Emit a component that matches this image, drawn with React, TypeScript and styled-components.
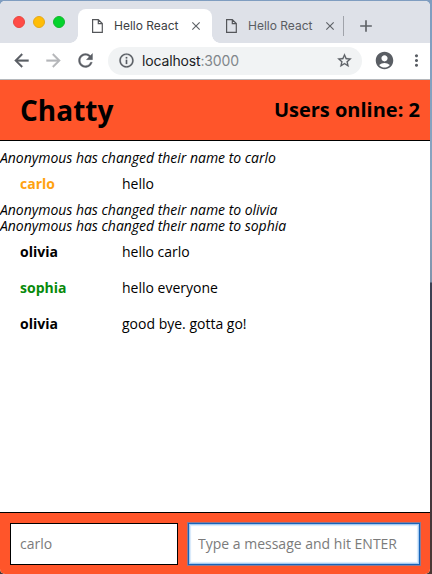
import React from 'react';
import styled, { createGlobalStyle } from 'styled-components';
import {
  MdArrowBack, MdArrowForward, MdRefresh, MdInfoOutline, MdStarBorder,
  MdAccountCircle, MdMoreVert, MdAdd, MdClose,
} from 'react-icons/md';

const GlobalStyle = createGlobalStyle`
  * { box-sizing: border-box; }
  html, body { margin: 0; padding: 0; overflow: hidden; }
  body { font-family: "Open Sans", sans-serif; color: #000; }
`;

const Desktop = styled.div`
  width: 432px;
  height: 574px;
  padding: 1px 2px 0 0;
  background: linear-gradient(#7f9dc0 0, #8ba5c0 200px, #7f93ab 282px, #3b4153 283px, #3a3644 420px, #4b3834 574px);
`;

const Window = styled.div`
  display: flex;
  flex-direction: column;
  width: 430px;
  height: 573px;
  overflow: hidden;
  border-radius: 5px;
  background: #fff;
`;

const TabStrip = styled.div`
  display: flex;
  height: 42px;
  flex: none;
  padding: 8px 0 0 13px;
  background: #dee1e8;
`;

const TrafficLights = styled.div`
  display: flex;
  gap: 8px;
  width: 65px;
  padding-top: 7px;
`;

const Light = styled.span<{ $fill: string; $ring: string }>`
  width: 12px;
  height: 12px;
  border-radius: 50%;
  border: 1px solid ${p => p.$ring};
  background: ${p => p.$fill};
`;

const Tab = styled.div<{ $active?: boolean }>`
  position: relative;
  display: flex;
  align-items: center;
  width: 134px;
  height: 34px;
  padding: 0 0 1px 14px;
  border-radius: 8px 8px 0 0;
  background: ${p => (p.$active ? '#fff' : 'transparent')};
  color: ${p => (p.$active ? '#3c4043' : '#5a5d63')};
  font: 400 12px/16px Inter, sans-serif;

  &::before, &::after {
    content: "";
    display: ${p => (p.$active ? 'block' : 'none')};
    position: absolute;
    bottom: 0;
    width: 8px;
    height: 8px;
  }
  &::before { left: -8px; background: radial-gradient(circle at 0 0, transparent 7.5px, #fff 8px); }
  &::after { right: -8px; background: radial-gradient(circle at 100% 0, transparent 7.5px, #fff 8px); }
`;

const TabTitle = styled.span`
  flex: none;
  width: 86px;
  padding-left: 11px;
  white-space: nowrap;
  letter-spacing: 0;
`;

const TabClose = styled(MdClose)`
  width: 14px;
  height: 14px;
  flex: none;
  color: #5f6368;
`;

const TabDivider = styled.span`
  width: 1px;
  height: 20px;
  margin: 7px 12px 0 -3px;
  background: #a0a3aa;
`;

const NewTab = styled(MdAdd)`
  width: 20px;
  height: 20px;
  margin-top: 7px;
  color: #5f6368;
`;

const Toolbar = styled.div`
  display: flex;
  align-items: center;
  flex: none;
  height: 37px;
  padding: 0 0 1px 11px;
  border-bottom: 1px solid #b5b8bc;
  color: #5a5e64;
`;

const NavButtons = styled.div`
  display: flex;
  gap: 11px;
  width: 97px;
  svg { width: 21px; height: 21px; }
  path:not([fill="none"]) { stroke: currentColor; stroke-width: 0.4px; }
  svg:nth-child(2) { color: #b5b6b9; }
`;

const AddressBar = styled.div`
  display: flex;
  align-items: center;
  width: 254px;
  height: 28px;
  padding: 0 9px 0 10px;
  border-radius: 14px;
  background: #f1f3f4;
  svg { width: 17px; height: 17px; }
  path:not([fill="none"]) { stroke: currentColor; stroke-width: 0.3px; }
`;

const Url = styled.span`
  flex: 1;
  padding-left: 7px;
  color: #202124;
  font: 400 14px/18px Inter, sans-serif;
  letter-spacing: -0.15px;
  span { color: #80868b; }
`;

const Profile = styled(MdAccountCircle)`
  width: 21px;
  height: 21px;
  margin-left: 12px;
`;

const Menu = styled(MdMoreVert)`
  width: 19px;
  height: 19px;
  margin-left: 12px;
`;

const Header = styled.header`
  display: flex;
  align-items: center;
  justify-content: space-between;
  flex: none;
  height: 61px;
  padding: 0 10px 0 20px;
  border-bottom: 1px solid #000;
  background: #ff552a;
`;

const Brand = styled.h1`
  margin: 0;
  font-size: 28px;
  line-height: 38px;
`;

const OnlineCount = styled.span`
  font-size: 20px;
  font-weight: 700;
  line-height: 28px;
`;

const Messages = styled.main`
  flex: 1;
  padding-top: 9px;
  font-size: 14px;
  line-height: 16px;
`;

const SystemMessage = styled.div`
  font-style: italic;
  letter-spacing: -0.02px;
`;

const Message = styled.div`
  display: flex;
  padding: 10px 20px;
`;

const Username = styled.span<{ $color: string }>`
  width: 102px;
  color: ${p => p.$color};
  font-weight: 700;
`;

const Footer = styled.footer`
  display: flex;
  gap: 10px;
  flex: none;
  height: 62px;
  padding: 10px 10px 9px;
  border-top: 1px solid #000;
  background: #ff552a;
`;

const Field = styled.input<{ $focused?: boolean }>`
  width: ${p => (p.$focused ? '232px' : '168px')};
  height: 42px;
  padding: 0 9px 2px;
  border: 1px solid ${p => (p.$focused ? '#1764b8' : '#000')};
  border-radius: 0;
  outline: none;
  background: #fff;
  box-shadow: ${p => (p.$focused ? '0 0 0 1px #8d7892, inset 0 0 0 1px #a5cbf2, inset 0 0 1px 2px #d8e9fb' : 'none')};
  font: 14px "Open Sans", sans-serif;
  &::placeholder { color: #7b7b7b; opacity: 1; }
`;

function PageIcon() {
  return (
    <svg width="11" height="14" viewBox="0 0 11 14" fill="none" stroke="#54565a" strokeWidth="1.2">
      <path d="M.6.6h5.7l4 4v8.8H.6zM6.3.6v4h4" />
    </svg>
  );
}

const BrowserTab = ({ active }: { active?: boolean }) => (
  <Tab $active={active}>
    <PageIcon />
    <TabTitle>Hello React</TabTitle>
    <TabClose />
  </Tab>
);

type Entry = { user?: string; color?: string; text: string };

const entries: Entry[] = [
  { text: 'Anonymous has changed their name to carlo' },
  { user: 'carlo', color: '#ffa20f', text: 'hello' },
  { text: 'Anonymous has changed their name to olivia' },
  { text: 'Anonymous has changed their name to sophia' },
  { user: 'olivia', color: '#000', text: 'hello carlo' },
  { user: 'sophia', color: '#078a0b', text: 'hello everyone' },
  { user: 'olivia', color: '#000', text: 'good bye. gotta go!' },
];

export default function App() {
  return (
    <Desktop>
      <GlobalStyle />
      <Window>
        <TabStrip>
          <TrafficLights>
            <Light $fill="#ff4b46" $ring="#e8473f" />
            <Light $fill="#ffbd06" $ring="#e5a91a" />
            <Light $fill="#04d32c" $ring="#15b72e" />
          </TrafficLights>
          <BrowserTab active />
          <BrowserTab />
          <TabDivider />
          <NewTab />
        </TabStrip>
        <Toolbar>
          <NavButtons><MdArrowBack /><MdArrowForward /><MdRefresh /></NavButtons>
          <AddressBar>
            <MdInfoOutline />
            <Url>localhost<span>:3000</span></Url>
            <MdStarBorder />
          </AddressBar>
          <Profile />
          <Menu />
        </Toolbar>
        <Header>
          <Brand>Chatty</Brand>
          <OnlineCount>Users online: 2</OnlineCount>
        </Header>
        <Messages>
          {entries.map((entry, i) => entry.user ? (
            <Message key={i}>
              <Username $color={entry.color!}>{entry.user}</Username>
              <span>{entry.text}</span>
            </Message>
          ) : <SystemMessage key={i}>{entry.text}</SystemMessage>)}
        </Messages>
        <Footer>
          <Field placeholder="carlo" />
          <Field $focused placeholder="Type a message and hit ENTER" />
        </Footer>
      </Window>
    </Desktop>
  );
}
